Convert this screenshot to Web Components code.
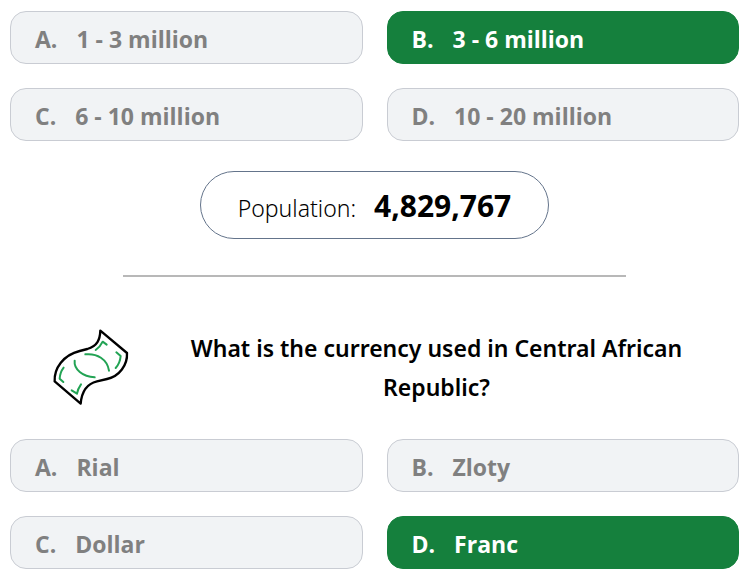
<!DOCTYPE html>
<html lang="en">
<head>
<meta charset="utf-8">
<meta name="viewport" content="width=device-width, initial-scale=1">
<title>Country quiz</title>
<style>
  body { margin: 0; background: #fff; color: #000; font-family: "Noto Sans", "Open Sans", sans-serif; }
</style>
</head>
<body>
<quiz-page>
  <answer-grid>
    <answer-option letter="A">1 - 3 million</answer-option>
    <answer-option letter="B" correct>3 - 6 million</answer-option>
    <answer-option letter="C">6 - 10 million</answer-option>
    <answer-option letter="D">10 - 20 million</answer-option>
  </answer-grid>
  <fact-pill label="Population:">4,829,767</fact-pill>
  <section-rule></section-rule>
  <quiz-question>
    <banknote-icon slot="icon"></banknote-icon>
    What is the currency used in Central African Republic?
  </quiz-question>
  <answer-grid>
    <answer-option letter="A">Rial</answer-option>
    <answer-option letter="B">Zloty</answer-option>
    <answer-option letter="C">Dollar</answer-option>
    <answer-option letter="D" correct>Franc</answer-option>
  </answer-grid>
</quiz-page>
<script>
  const define = (name, html, setup) => {
    const template = document.createElement('template');
    template.innerHTML = html;
    customElements.define(name, class extends HTMLElement {
      constructor() {
        super();
        this.attachShadow({ mode: 'open' }).append(template.content.cloneNode(true));
      }
      connectedCallback() { if (setup) setup(this, this.shadowRoot); }
    });
  };

  define('quiz-page', `
    <style>
      :host { display: block; }
      main { display: flex; flex-direction: column; padding: 11px 6px 1px 10px; }
    </style>
    <main><slot></slot></main>`);

  define('answer-grid', `
    <style>
      :host { display: grid; grid-template-columns: 1fr 1fr; gap: 24px; }
    </style>
    <slot></slot>`);

  define('answer-option', `
    <style>
      :host { display: block; }
      button {
        display: flex; align-items: center; gap: 19px; width: 100%;
        padding: 11px 24px 7px; border: 1px solid #c9ccd3; border-radius: 16px;
        background: #f1f3f5; color: #808080;
        font: 700 23px/33px "Open Sans", "Noto Sans", sans-serif; text-align: left; cursor: pointer;
      }
      :host([correct]) button { background: #15803d; border-color: #15803d; color: #fff; }
    </style>
    <button type="button"><span id="letter"></span><span><slot></slot></span></button>`,
    (el, root) => { root.getElementById('letter').textContent = el.getAttribute('letter') + '.'; });

  define('fact-pill', `
    <style>
      :host { display: flex; align-self: center; align-items: baseline; gap: 18px;
        margin-top: 30px; padding: 14px 37px 12px; border: 1px solid #64748b; border-radius: 34px; line-height: 40px; }
      #label { font-size: 23px; line-height: 33px; font-weight: 300; }
      strong { font: 700 30px/40px "Open Sans", "Noto Sans", sans-serif; }
    </style>
    <span id="label"></span><strong><slot></slot></strong>`,
    (el, root) => { root.getElementById('label').textContent = el.getAttribute('label'); });

  define('section-rule', `
    <style>
      :host { display: block; align-self: center; width: 69%; margin-top: 36px; }
      hr { margin: 0; border: 0; border-top: 2px solid #b8b8b8; }
    </style>
    <hr>`);

  define('quiz-question', `
    <style>
      :host { display: flex; align-items: center; gap: 36px; margin: 51px 32px 31px 40px; }
      h2 { flex: 1; margin: 0; font-size: 23px; line-height: 39px; font-weight: 600; text-align: center; }
    </style>
    <slot name="icon"></slot><h2><slot></slot></h2>`);

  define('banknote-icon', `
    <style>
      :host { display: block; flex: none; }
      svg { display: block; width: 80px; height: 80px; }
    </style>
    <svg viewBox="0 0 240 240" fill="none" stroke-width="7" stroke-linecap="round" stroke-linejoin="round" aria-hidden="true">
      <g stroke="#000">
        <path d="M151 8L231 75C233 111 208 145 171 153L141 160C108 168 95 191 92 227L14 160C12 121 40 81 89 69L112 63C142 54 150 35 151 8Z"/>
      </g>
      <g stroke="#22a354" stroke-width="6">
        <path d="M137 66Q151 56 158 41L170 50M199 73L212 84Q210 106 197 120"/>
        <path d="M106 79C141 75 172 94 177 128M74 98C71 124 98 146 134 148"/>
        <path d="M41 119Q30 133 29 152L40 162M65 187L81 197Q83 183 93 169"/>
      </g>
    </svg>`);
</script>
</body>
</html>
